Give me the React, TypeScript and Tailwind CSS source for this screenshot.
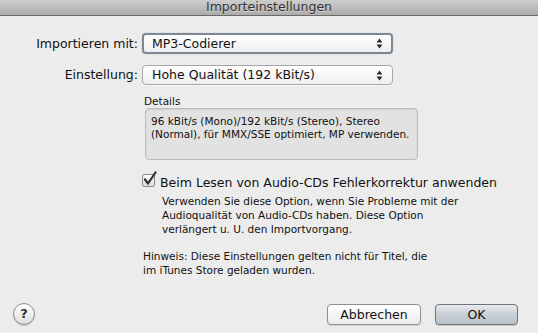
import React from "react";

const font = { fontFamily: '"DejaVu Sans", "Liberation Sans", sans-serif' };

function Arrows() {
  return (
    <svg width="7" height="11" viewBox="0 0 7 11" className="shrink-0">
      <path d="M3.5 0.5 L6.5 4.5 L0.5 4.5 Z" fill="#2a2a2a" />
      <path d="M3.5 10.5 L6.5 6.5 L0.5 6.5 Z" fill="#2a2a2a" />
    </svg>
  );
}

function Popup({ text, focused }: { text: string; focused?: boolean }) {
  return (
    <div
      className={
        focused
          ? "w-[251px] h-[21px] rounded-[4px] border-2 border-[#7d8894] bg-gradient-to-b from-[#ffffff] to-[#eeeeee] flex items-center pl-[8px] pr-[8px] shadow-[0_0_1px_#9aa6b2]"
          : "w-[251px] h-[20px] rounded-[4px] border border-[#a6a6a6] bg-gradient-to-b from-[#ffffff] to-[#efefef] flex items-center pl-[9px] pr-[9px] shadow-[0_1px_0_#f8f8f8]"
      }
    >
      <span className="flex-1 text-[12.5px] leading-[16px] text-[#111]">{text}</span>
      <Arrows />
    </div>
  );
}

function Check() {
  return (
    <div className="relative w-[13px] h-[13px] -mt-[1px] shrink-0 rounded-[2px] border border-[#8a8a8a] bg-gradient-to-b from-[#fdfdfd] to-[#dcdcdc]">
      <svg width="16" height="16" viewBox="0 0 16 16" className="absolute -left-[1px] -top-[4px]">
        <path d="M3 8.5 L6 12.5 L13.5 1.5" stroke="#2d2d2d" strokeWidth="2.2" fill="none" strokeLinecap="round" strokeLinejoin="round" />
      </svg>
    </div>
  );
}

export default function App() {
  return (
    <div className="w-[538px] h-[333px] bg-[#ececec] flex flex-col overflow-hidden text-[#111]" style={font}>
      <div className="h-[16px] shrink-0 border-b border-[#6a6a6a] bg-gradient-to-b from-[#cdcdcd] to-[#acacac] flex justify-center overflow-hidden">
        <span className="text-[12.5px] leading-[13px] text-[#333] [text-shadow:0_1px_0_rgba(255,255,255,0.4)]">Importeinstellungen</span>
      </div>

      <div className="flex flex-col pt-[17px]">
        <div className="flex items-center">
          <span className="w-[138px] text-right text-[12.5px] leading-[16px]">Importieren mit:</span>
          <div className="ml-[4px]">
            <Popup text="MP3-Codierer" focused />
          </div>
        </div>
        <div className="flex items-center mt-[11px]">
          <span className="w-[138px] text-right text-[12.5px] leading-[16px]">Einstellung:</span>
          <div className="ml-[4px]">
            <Popup text="Hohe Qualität (192 kBit/s)" />
          </div>
        </div>

        <div className="ml-[144px] mt-[10px] text-[10.5px] leading-[12px]">Details</div>
        <div className="ml-[145px] mt-[1px] w-[273px] h-[52px] rounded-[4px] border border-[#bdbdbd] bg-[#e2e2e2] pt-[6px] px-[5px] shadow-[inset_0_1px_2px_rgba(0,0,0,0.08)]">
          <p className="text-[10.5px] leading-[13px]">
            96 kBit/s (Mono)/192 kBit/s (Stereo), Stereo
            <br />
            (Normal), für MMX/SSE optimiert, MP verwenden.
          </p>
        </div>

        <div className="flex items-start ml-[142px] mt-[15px] gap-[5px]">
          <Check />
          <span className="text-[12.5px] leading-[16px]">Beim Lesen von Audio-CDs Fehlerkorrektur anwenden</span>
        </div>
        <p className="ml-[162px] mt-[3px] text-[10.5px] leading-[14px]">
          Verwenden Sie diese Option, wenn Sie Probleme mit der
          <br />
          Audioqualität von Audio-CDs haben. Diese Option
          <br />
          verlängert u. U. den Importvorgang.
        </p>
        <p className="ml-[143px] mt-[13px] text-[10.5px] leading-[14px]">
          Hinweis: Diese Einstellungen gelten nicht für Titel, die
          <br />
          im iTunes Store geladen wurden.
        </p>
      </div>

      <div className="mt-auto flex items-center pl-[13px] pr-[20px] pb-[8px]">
        <div className="w-[22px] h-[22px] -mt-[1px] rounded-full border border-[#8c8c8c] bg-gradient-to-b from-[#ffffff] to-[#dedede] flex items-center justify-center shadow-[0_1px_1px_rgba(0,0,0,0.15)]">
          <span className="text-[13px] leading-[14px] font-bold text-[#333]">?</span>
        </div>
        <div className="flex-1" />
        <button className="w-[94px] h-[21px] rounded-[4px] border border-[#8e8e8e] bg-gradient-to-b from-[#ffffff] to-[#ececec] text-[12.5px] leading-[16px] text-[#111] shadow-[0_1px_1px_rgba(0,0,0,0.12)]">
          Abbrechen
        </button>
        <button className="ml-[14px] w-[83px] h-[21px] rounded-[4px] border border-[#6f747a] bg-gradient-to-b from-[#e9ecef] via-[#c9cfd6] to-[#b9c1ca] text-[12.5px] leading-[16px] text-[#111] shadow-[0_1px_1px_rgba(0,0,0,0.15)]">
          OK
        </button>
      </div>
    </div>
  );
}
